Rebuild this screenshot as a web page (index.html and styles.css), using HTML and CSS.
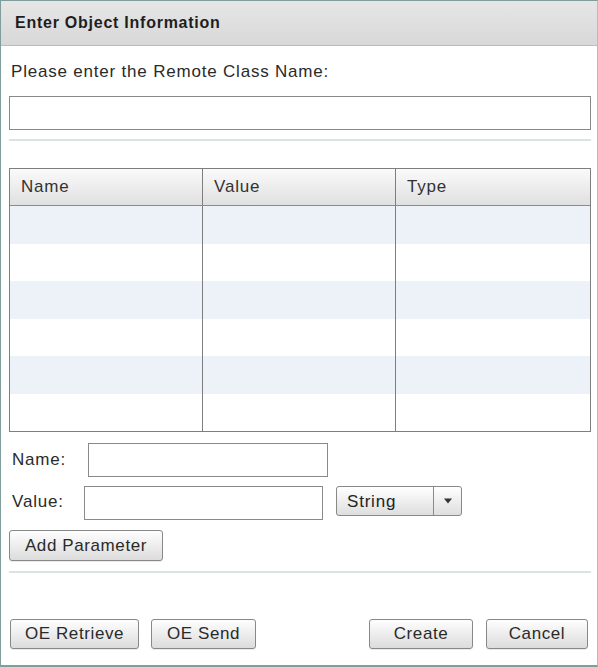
FILE: index.html
```html
<!DOCTYPE html>
<html>
<head>
<meta charset="utf-8">
<link rel="stylesheet" href="styles.css">
</head>
<body>
<div class="dialog">
  <div class="header"><span class="title">Enter Object Information</span></div>
  <div class="content">
    <div class="prompt">Please enter the Remote Class Name:</div>
    <input class="field class-field" type="text">
    <div class="sep sep-top"></div>
    <div class="grid">
      <div class="grid-head">
        <div class="cell">Name</div>
        <div class="cell">Value</div>
        <div class="cell last">Type</div>
      </div>
      <div class="grid-row alt"><div class="cell"></div><div class="cell"></div><div class="cell last"></div></div>
      <div class="grid-row"><div class="cell"></div><div class="cell"></div><div class="cell last"></div></div>
      <div class="grid-row alt"><div class="cell"></div><div class="cell"></div><div class="cell last"></div></div>
      <div class="grid-row"><div class="cell"></div><div class="cell"></div><div class="cell last"></div></div>
      <div class="grid-row alt"><div class="cell"></div><div class="cell"></div><div class="cell last"></div></div>
      <div class="grid-row"><div class="cell"></div><div class="cell"></div><div class="cell last"></div></div>
    </div>
    <div class="form-row name-row">
      <label class="lbl">Name:</label>
      <input class="field name-field" type="text">
    </div>
    <div class="form-row value-row">
      <label class="lbl">Value:</label>
      <input class="field value-field" type="text">
      <div class="select">
        <span class="select-text">String</span>
        <span class="select-arrow"><svg width="10" height="6" viewBox="0 0 10 6"><path d="M1 0.5 L9 0.5 L5 5.5 Z" fill="#333"/></svg></span>
      </div>
    </div>
    <button class="btn add-btn">Add Parameter</button>
    <div class="sep sep-bottom"></div>
    <div class="footer">
      <div class="group">
        <button class="btn retrieve-btn">OE Retrieve</button>
        <button class="btn send-btn">OE Send</button>
      </div>
      <div class="group">
        <button class="btn create-btn">Create</button>
        <button class="btn cancel-btn">Cancel</button>
      </div>
    </div>
  </div>
</div>
</body>
</html>
```

FILE: styles.css
```css
* { box-sizing: border-box; }
html, body { margin: 0; padding: 0; background: #fff; }
body {
  font-family: "Liberation Sans", Arial, sans-serif;
  font-size: 17px;
  letter-spacing: 0.8px;
  color: #2a2a2a;
}
.dialog {
  width: 598px;
  height: 667px;
  border: 1px solid #7f9e9b;
  border-right-color: #a9c2c0;
  border-bottom-width: 2px;
  display: flex;
  flex-direction: column;
  background: #fff;
}
.header {
  height: 45px;
  flex: none;
  background: linear-gradient(#e6e6e6, #d8d8d8);
  border-bottom: 1px solid #b8bcbc;
  display: flex;
  align-items: center;
  padding-left: 14px;
}
.title {
  font-weight: bold;
  font-size: 16px;
  letter-spacing: 0.75px;
  color: #1e1e1e;
}
.content {
  padding: 0 6px 0 8px;
  display: flex;
  flex-direction: column;
  flex: 1;
}
.prompt {
  margin-top: 16px;
  height: 20px;
  line-height: 20px;
  padding-left: 2px;
}
.field {
  display: block;
  height: 34px;
  border: 1px solid #8a8a8a;
  background: #fff;
  padding: 0 4px;
  font: inherit;
  outline: none;
  margin: 0;
}
.class-field {
  width: 582px;
  margin-top: 14px;
}
.sep {
  height: 2px;
  background: #dde3e3;
  width: 582px;
}
.sep-top { margin-top: 9px; }
.grid {
  margin-top: 27px;
  width: 582px;
  border: 1px solid #7e7e7e;
  display: flex;
  flex-direction: column;
}
.grid-head {
  display: flex;
  height: 37px;
  background: linear-gradient(#fafafa, #e0e0e0);
  border-bottom: 1px solid #8a8a8a;
}
.grid-head .cell {
  padding-left: 11px;
  line-height: 36px;
  color: #333;
}
.grid-row {
  display: flex;
  height: 37.5px;
  background: #fff;
}
.grid-row.alt { background: #edf2f9; }
.cell {
  width: 193px;
  border-right: 1px solid #7e7e7e;
  flex: none;
}
.cell.last {
  border-right: none;
  flex: 1;
}
.form-row {
  display: flex;
  align-items: center;
}
.name-row { margin-top: 11px; }
.value-row { margin-top: 9px; align-items: flex-start; }
.lbl {
  padding-left: 3px;
  line-height: 20px;
}
.name-row .lbl { width: 79px; }
.value-row .lbl { width: 75px; margin-top: 6px; }
.name-field { width: 240px; }
.value-field { width: 239px; }
.select {
  margin-left: 13px;
  width: 126px;
  height: 30px;
  border: 1px solid #888;
  border-radius: 3px;
  background: linear-gradient(#ffffff, #dedede);
  display: flex;
}
.select-text {
  flex: 1;
  padding-left: 10px;
  line-height: 30px;
  color: #222;
}
.select-arrow {
  width: 28px;
  border-left: 1px solid #8a8a8a;
  display: flex;
  align-items: center;
  justify-content: center;
}
.btn {
  font: inherit;
  letter-spacing: 0.6px;
  color: #2a2a2a;
  height: 30px;
  border: 1px solid #888;
  border-radius: 3px;
  background: linear-gradient(#fefefe, #dcdcdc);
  padding: 0;
  margin: 0;
  box-shadow: 0 1px 0 rgba(0,0,0,0.08);
}
.add-btn {
  width: 154px;
  height: 31px;
  margin-top: 10px;
}
.sep-bottom { margin-top: 10px; }
.footer {
  margin-top: 46px;
  display: flex;
  justify-content: space-between;
  width: 582px;
}
.group { display: flex; }
.retrieve-btn { width: 129px; margin-left: 1px; }
.send-btn { width: 105px; margin-left: 12px; }
.create-btn { width: 104px; }
.cancel-btn { width: 102px; margin-left: 13px; margin-right: 3px; }
```
